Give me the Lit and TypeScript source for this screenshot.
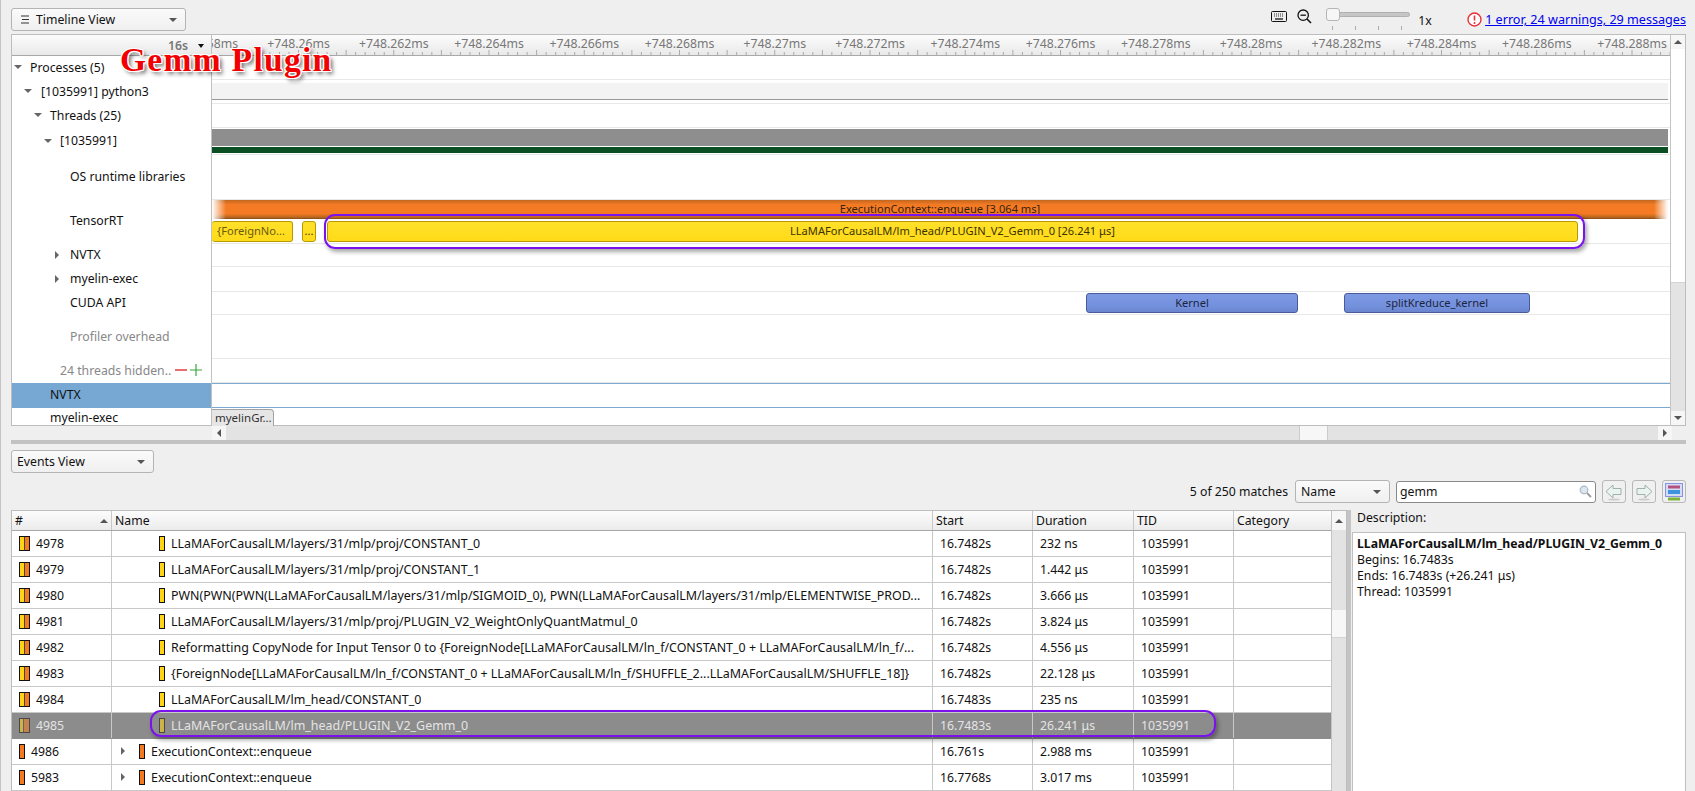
import { LitElement, html, css, svg } from "lit";
import { customElement } from "lit/decorators.js";

const TREE = [
  { h: 24, label: "Processes (5)", x: 30, arrow: "down", ax: 14 },
  { h: 24, label: "[1035991] python3", x: 41, arrow: "down", ax: 24 },
  { h: 24, label: "Threads (25)", x: 50, arrow: "down", ax: 34 },
  { h: 27, label: "[1035991]", x: 60, arrow: "down", ax: 44 },
  { h: 45, label: "OS runtime libraries", x: 70 },
  { h: 44, label: "TensorRT", x: 70, pb: 4 },
  { h: 23, label: "NVTX", x: 70, arrow: "right", ax: 55 },
  { h: 25, label: "myelin-exec", x: 70, arrow: "right", ax: 55 },
  { h: 23, label: "CUDA API", x: 70 },
  { h: 44, label: "Profiler overhead", x: 70, muted: true },
  { h: 24, label: "24 threads hidden..", x: 60, muted: true, hidden: true },
  { h: 25, label: "NVTX", x: 50, sel: true },
  { h: 18, label: "myelin-exec", x: 50, pb: 0 },
];

const RULER = Array.from({ length: 16 }, (_, i) => {
  const v = 258 + i * 2;
  const s = v % 10 === 0 ? String(v / 10) : String(v);
  return { text: `+748.${s}ms`, cx: 86.5 + (i - 1) * 95.25 };
});

const ROWS = [
  ["4978", "LLaMAForCausalLM/layers/31/mlp/proj/CONSTANT_0", "16.7482s", "232 ns"],
  ["4979", "LLaMAForCausalLM/layers/31/mlp/proj/CONSTANT_1", "16.7482s", "1.442 μs"],
  ["4980", "PWN(PWN(PWN(LLaMAForCausalLM/layers/31/mlp/SIGMOID_0), PWN(LLaMAForCausalLM/layers/31/mlp/ELEMENTWISE_PROD...", "16.7482s", "3.666 μs"],
  ["4981", "LLaMAForCausalLM/layers/31/mlp/proj/PLUGIN_V2_WeightOnlyQuantMatmul_0", "16.7482s", "3.824 μs"],
  ["4982", "Reformatting CopyNode for Input Tensor 0 to {ForeignNode[LLaMAForCausalLM/ln_f/CONSTANT_0 + LLaMAForCausalLM/ln_f/...", "16.7482s", "4.556 μs"],
  ["4983", "{ForeignNode[LLaMAForCausalLM/ln_f/CONSTANT_0 + LLaMAForCausalLM/ln_f/SHUFFLE_2...LLaMAForCausalLM/SHUFFLE_18]}", "16.7482s", "22.128 μs"],
  ["4984", "LLaMAForCausalLM/lm_head/CONSTANT_0", "16.7483s", "235 ns"],
  ["4985", "LLaMAForCausalLM/lm_head/PLUGIN_V2_Gemm_0", "16.7483s", "26.241 μs", "sel"],
  ["4986", "ExecutionContext::enqueue", "16.761s", "2.988 ms", "top"],
  ["5983", "ExecutionContext::enqueue", "16.7768s", "3.017 ms", "top"],
];

@customElement("app-root")
export class AppRoot extends LitElement {
  static styles = css`
    :host { display: block; width: 1695px; height: 791px; overflow: hidden; background: #efefef; font: 12.25px "Noto Sans", "Open Sans", sans-serif; color: #111; }
    .app { position: relative; box-sizing: border-box; width: 1695px; height: 791px; padding: 0 9px 0 10px; border-left: 1px solid #c4c4c4; display: flex; flex-direction: column; overflow: hidden; }
    .topbar { height: 34px; flex: none; display: flex; align-items: flex-start; position: relative; }
    .combo { box-sizing: border-box; height: 23px; border: 1px solid #b4b4b4; border-radius: 3px; background: linear-gradient(#fafafa, #f0f0f0); display: flex; align-items: center; padding: 0 4px 0 5px; gap: 6px; }
    .combo .t { flex: 1; }
    .caret { width: 0; height: 0; border-left: 4px solid transparent; border-right: 4px solid transparent; border-top: 4px solid #555; flex: none; margin-right: 4px; }
    .view { width: 175px; margin-top: 8px; padding-left: 8px; }
    .tools { margin-left: auto; display: flex; align-items: center; height: 34px; }
    .zoomslider { position: relative; width: 84px; height: 34px; margin: 0 8px 0 14px; }
    .track { position: absolute; left: 0; right: 0; top: 12px; height: 3px; background: #c6c6c6; border: 1px solid #b0b0b0; border-radius: 3px; }
    .thumb { position: absolute; left: 0; top: 8px; width: 12px; height: 11px; background: #f6f6f6; border: 1px solid #b5b5b5; border-radius: 3px; }
    .tick { position: absolute; top: 26px; width: 1px; height: 4px; background: #aaa; }
    .onex { width: 49px; padding-top: 6px; }
    .err { display: flex; align-items: center; gap: 3px; padding-top: 5px; }
    .err a { color: #0000ee; text-decoration: underline; font-size: 12.6px; }

    .timeline { flex: none; box-sizing: border-box; height: 392px; border: 1px solid #bdbdbd; display: flex; background: #fff; }
    .tl-main { flex: 1; min-width: 0; display: flex; flex-direction: column; }
    .tl-head { height: 21px; flex: none; box-sizing: border-box; display: flex; background: linear-gradient(#fcfcfc, #e9e9e9); border-bottom: 1px solid #a8a8a8; }
    .corner { width: 200px; box-sizing: border-box; flex: none; border-right: 1px solid #c0c0c0; display: flex; align-items: center; justify-content: flex-end; padding-right: 7px; color: #777; font-weight: 600; gap: 10px; }
    .corner .caret { border-top-color: #111; margin: 2px 0 0; border-left-width: 3.5px; border-right-width: 3.5px; }
    .ruler { position: relative; flex: 1; overflow: hidden; color: #777; }
    .ruler span { position: absolute; top: 0; line-height: 18px; transform: translateX(-50%); white-space: nowrap; }
    .ruler svg { position: absolute; left: 0; bottom: 0; }
    .tl-row { display: flex; flex: none; }
    .lbl { position: relative; box-sizing: border-box; width: 200px; flex: none; border-right: 1px solid #c0c0c0; display: flex; align-items: center; white-space: nowrap; }
    .lbl.muted { color: #888; }
    .lbl.sel { background: #76a8d3; }
    .lbl .arrow { position: absolute; }
    .ad { width: 0; height: 0; border-left: 4px solid transparent; border-right: 4px solid transparent; border-top: 4px solid #666; }
    .ar { width: 0; height: 0; border-top: 4px solid transparent; border-bottom: 4px solid transparent; border-left: 4px solid #666; }
    .pm { margin-left: 4px; display: inline-flex; gap: 3px; }
    .trk { position: relative; flex: 1; min-width: 0; box-sizing: border-box; border-bottom: 1px solid #e8e8e8; }
    .trk.seltrk { border-top: 1px solid #7aa9d2; border-bottom: 1px solid #7aa9d2; }
    .trk.last { border-bottom: none; }
    .b { position: absolute; box-sizing: border-box; }
    .py { left: 0; right: 2px; top: 3px; height: 17px; background: #f3f3f3; border-bottom: 1px solid #999; }
    .gray { left: 0; right: 2px; top: 1px; height: 17px; background: #8e8e8e; }
    .green { left: 0; right: 2px; top: 19px; height: 6px; background: #0a4f24; }
    .orange { left: 0; right: 2px; top: 0; height: 19px; text-align: center; line-height: 17px; font-size: 11.1px; color: #3a2208; background: linear-gradient(180deg, #c2661f 0%, #f47b24 25%, #f47b24 72%, #b5641e 92%, #7f4714 100%); }
    .fadeL, .fadeR { position: absolute; top: 0; bottom: 0; width: 14px; }
    .fadeL { left: 0; background: linear-gradient(90deg, #fff, rgba(255,255,255,0)); }
    .fadeR { right: 0; background: linear-gradient(270deg, #fff, rgba(255,255,255,0)); }
    .yel { top: 21px; height: 21px; border: 1px solid #b89a00; border-radius: 3px; text-align: center; line-height: 18px; background: linear-gradient(#ffe02a, #ffdb18); color: #3d3300; white-space: nowrap; overflow: hidden; font-size: 11.1px; }
    .yel.first { left: 0; width: 81px; text-align: left; padding-left: 5px; color: #6a5a10; border-left: none; }
    .yel.dots { left: 90px; width: 14px; }
    .yel.main { left: 115px; width: 1251px; }
    .blue { top: 1px; height: 20px; border: 1px solid #4a5a9a; border-radius: 3px; text-align: center; line-height: 17px; background: linear-gradient(#7f9ae4, #7390dd 70%, #6a85cc); color: #1c2440; font-size: 11.1px; }
    .kernel { left: 874px; width: 212px; }
    .split-k { left: 1132px; width: 186px; }
    .mye { left: 0; top: 1px; width: 62px; height: 17px; background: #e6e6e6; border: 1px solid #a2a2a2; border-bottom: none; border-left: none; border-radius: 0 4px 0 0; padding-left: 3px; line-height: 15px; overflow: hidden; color: #333; font-size: 11.5px; }

    .vs { width: 14px; flex: none; display: flex; flex-direction: column; background: #e3e3e3; border-left: 1px solid #c4c4c4; box-sizing: content-box; }
    .sbtn { flex: none; display: flex; align-items: center; justify-content: center; background: #f6f6f6; }
    .au { width: 0; height: 0; border-left: 4px solid transparent; border-right: 4px solid transparent; border-bottom: 4px solid #555; }
    .adn { width: 0; height: 0; border-left: 4px solid transparent; border-right: 4px solid transparent; border-top: 4px solid #555; }
    .al { width: 0; height: 0; border-top: 4px solid transparent; border-bottom: 4px solid transparent; border-right: 4px solid #555; }
    .arr { width: 0; height: 0; border-top: 4px solid transparent; border-bottom: 4px solid transparent; border-left: 4px solid #555; }
    .vthumb { background: #fff; flex: none; border-bottom: 1px solid #d4d4d4; }
    .vfill { flex: 1; }

    .hs { flex: none; height: 14px; margin-left: 201px; margin-right: 14px; display: flex; background: #e3e3e3; }
    .hs .sbtn { width: 14px; }
    .hthumb { width: 27px; flex: none; background: #f7f7f7; border-left: 1px solid #ccc; border-right: 1px solid #ccc; margin-left: 1073px; }
    .split { flex: none; height: 4px; background: #c2c2c2; }

    .ev { width: 143px; margin-top: 6px; flex: none; }
    .find { flex: none; height: 23px; margin-top: 7px; display: flex; justify-content: flex-end; align-items: center; }
    .find .cnt { margin-right: 7px; }
    .namec { width: 95px; margin-right: 6px; }
    .search { box-sizing: border-box; width: 200px; height: 22px; background: #fff; border: 1px solid #8a8a8a; border-radius: 3px; display: flex; align-items: center; padding: 0 3px; justify-content: space-between; }
    .ib { box-sizing: border-box; width: 24px; height: 23px; border: 1px solid #b8b8b8; border-radius: 3px; background: #f0f0f0; display: flex; align-items: center; justify-content: center; margin-left: 6px; }

    .lower { flex: 1; min-height: 0; margin-top: 7px; display: flex; }
    .table { box-sizing: border-box; width: 1336px; flex: none; border: 1px solid #bdbdbd; border-bottom: none; display: flex; background: #fff; }
    .tbody { flex: 1; min-width: 0; }
    .tr { display: grid; grid-template-columns: 100px 821px 100px 101px 100px 99px; height: 26px; box-sizing: border-box; border-bottom: 1px solid #c8c8c8; }
    .tr.head { height: 20px; background: linear-gradient(#fcfcfc, #ebebeb); border-bottom: 1px solid #a8a8a8; }
    .tr > div { box-sizing: border-box; border-right: 1px solid #c8c8c8; display: flex; align-items: center; white-space: nowrap; overflow: hidden; padding: 0 0 1px 7px; min-width: 0; }
    .tr.head > div { padding: 0 0 0 3px; }
    .tr.head > div:first-child { justify-content: space-between; padding-right: 3px; }
    .tr.sel { background: #8c8c8c; color: #e4e4e4; border-bottom-color: #8c8c8c; }
    .tr > div.nm.leaf { padding-left: 47px; }
    .tr > div.nm.top { padding-left: 9px; }
    .nm .txt { overflow: hidden; white-space: nowrap; font-size: 12.45px; }
    .nm .ar { margin-right: 14px; flex: none; }
    .nm .ico { margin-right: 6px; margin-top: 1px; }
    .tr > div.num { gap: 6px; }
    .num .ico { margin-top: 1px; }
    .ico { box-sizing: border-box; height: 15px; border: 1.5px solid #111; flex: none; }
    .i2 { width: 11px; background: linear-gradient(90deg, #ffd414 0 3.5px, #444 3.5px 4.5px, #f47a20 4.5px); }
    .i1o { width: 6px; background: #f47a20; }
    .i1y { width: 6px; background: #ffd414; }
    .tr.sel .ico { opacity: .55; }
    .ts { width: 14px; flex: none; display: flex; flex-direction: column; background: #e3e3e3; border-left: 1px solid #c4c4c4; }
    .ts .gap { height: 80px; flex: none; }
    .ts .vthumb { height: 27px; background: #f7f7f7; }
    .desc { flex: 1; display: flex; flex-direction: column; min-width: 0; }
    .desc .h { height: 22px; flex: none; line-height: 16px; padding-left: 5px; }
    .desc .box { flex: 1; background: #fff; border: 1px solid #c0c0c0; border-bottom: none; padding: 3px 4px; line-height: 16px; }
    .desc b { font-weight: 700; }
    .sp { width: 5px; flex: none; background: linear-gradient(90deg, #c4c4c4 0 4px, transparent 4px); }

    .title { position: absolute; left: 119px; top: 41px; font: bold 33.5px "Liberation Serif", serif; letter-spacing: 1.3px; color: #f20000; white-space: nowrap; text-shadow: 1px 0 0 #fff, -1px 0 0 #fff, 0 1px 0 #fff, 0 -1px 0 #fff, 1px 1px 0 #fff, -1px -1px 0 #fff, 1px -1px 0 #fff, -1px 1px 0 #fff, 3px 3px 4px rgba(0,0,0,.6); }
    .ring { position: absolute; box-sizing: border-box; border: 2px solid #7a12ee; border-radius: 11px; box-shadow: 2px 3px 4px rgba(0,0,0,.35); pointer-events: none; }
    .ring1 { left: 323px; top: 214px; width: 1261px; height: 35px; }
    .ring2 { left: 149px; top: 710px; width: 1066px; height: 27px; }
  `;

  private ticks() {
    const lines = [];
    for (let i = 0; i < 154; i++) {
      const x = 86.5 - 47.625 + i * 9.525;
      const major = i % 5 === 0;
      lines.push(svg`<line x1=${x} x2=${x} y1=${major ? 0 : 2} y2="5" stroke="#aaa" stroke-width="1"></line>`);
    }
    return html`<svg width="1460" height="5">${lines}</svg>`;
  }

  private track(i: number) {
    switch (i) {
      case 1: return html`<div class="b py"></div>`;
      case 3: return html`<div class="b gray"></div><div class="b green"></div>`;
      case 5: return html`
        <div class="b orange">ExecutionContext::enqueue [3.064 ms]<div class="fadeL"></div><div class="fadeR"></div></div>
        <div class="b yel first">{ForeignNo...</div>
        <div class="b yel dots">...</div>
        <div class="b yel main">LLaMAForCausalLM/lm_head/PLUGIN_V2_Gemm_0 [26.241 μs]</div>`;
      case 8: return html`
        <div class="b blue kernel">Kernel</div>
        <div class="b blue split-k">splitKreduce_kernel</div>`;
      case 12: return html`<div class="b mye">myelinGr...</div>`;
    }
    return "";
  }

  private lbl(r: any) {
    const pb = r.pb ?? 2;
    return html`<div class="lbl ${r.muted ? "muted" : ""} ${r.sel ? "sel" : ""}" style="padding-left:${r.x - 12}px;padding-bottom:${pb}px">
      ${r.arrow ? html`<span class="arrow ${r.arrow === "down" ? "ad" : "ar"}" style="left:${r.ax - 12}px"></span>` : ""}
      <span>${r.label}</span>
      ${r.hidden ? html`<span class="pm"><svg width="12" height="12" viewBox="0 0 12 12"><path d="M0 6h12" stroke="#e23030" stroke-width="1.4"/></svg><svg width="12" height="12" viewBox="0 0 12 12"><path d="M0 6h12M6 0v12" stroke="#3aa83a" stroke-width="1.2"/></svg></span>` : ""}
    </div>`;
  }

  render() {
    return html`<div class="app">
      <div class="topbar">
        <div class="combo view">
          <svg width="10" height="9" viewBox="0 0 10 9"><path d="M1 1h8M2 4.500h7M1 8h8" stroke="#333" stroke-width="1.200"/></svg>
          <span class="t">Timeline View</span><span class="caret"></span>
        </div>
        <div class="tools">
          <svg width="16" height="11" viewBox="0 0 16 11" style="margin-top:-1px;margin-right:10px"><rect x=".5" y=".5" width="15" height="10" rx="1" fill="#eee" stroke="#111"/><path d="M3 3h10M3 5h10" stroke="#333" stroke-dasharray="1 1" stroke-width="1"/><path d="M4 8h8" stroke="#111" stroke-width="1.300"/></svg>
          <svg width="15" height="16" viewBox="0 0 15 16" style="margin-top:-1px"><circle cx="6.200" cy="6.200" r="5.200" fill="none" stroke="#111" stroke-width="1.300"/><path d="M3.500 6.200h5.400" stroke="#111" stroke-width="1.300"/><path d="M10 10l4 4" stroke="#111" stroke-width="1.600"/></svg>
          <div class="zoomslider">
            <div class="track"></div><div class="thumb"></div>
            <i class="tick" style="left:6px"></i><i class="tick" style="left:29px"></i><i class="tick" style="left:52px"></i><i class="tick" style="left:75px"></i>
          </div>
          <span class="onex">1x</span>
          <span class="err">
            <svg width="15" height="15" viewBox="0 0 15 15"><circle cx="7.500" cy="7.500" r="6.500" fill="#fff" stroke="#e8303a" stroke-width="1.400"/><path d="M7.500 3.500v5" stroke="#e8303a" stroke-width="1.600"/><circle cx="7.500" cy="11" r="1" fill="#e8303a"/></svg>
            <a>1 error, 24 warnings, 29 messages</a>
          </span>
        </div>
      </div>

      <div class="timeline">
        <div class="tl-main">
          <div class="tl-head">
            <div class="corner"><span>16s</span><span class="caret"></span></div>
            <div class="ruler">
              ${RULER.map((l) => html`<span style="left:${l.cx}px">${l.text}</span>`)}
              ${this.ticks()}
            </div>
          </div>
          ${TREE.map((r, i) => html`<div class="tl-row" style="height:${r.h}px">
            ${this.lbl(r)}
            <div class="trk ${r.sel ? "seltrk" : ""} ${i === 12 ? "last" : ""}">${this.track(i)}</div>
          </div>`)}
        </div>
        <div class="vs">
          <div class="sbtn" style="height:14px"><span class="au"></span></div>
          <div class="vthumb" style="height:233px"></div>
          <div class="vfill"></div>
          <div class="sbtn" style="height:14px"><span class="adn"></span></div>
        </div>
      </div>
      <div class="hs">
        <div class="sbtn"><span class="al"></span></div>
        <div class="hthumb"></div>
        <div class="vfill"></div>
        <div class="sbtn"><span class="arr"></span></div>
      </div>
      <div class="split"></div>

      <div class="combo ev"><span class="t">Events View</span><span class="caret"></span></div>
      <div class="find">
        <span class="cnt">5 of 250 matches</span>
        <div class="combo namec"><span class="t">Name</span><span class="caret"></span></div>
        <div class="search"><span>gemm</span>
          <svg width="13" height="13" viewBox="0 0 13 13"><circle cx="5" cy="5" r="3.800" fill="#dbe8f2" stroke="#a8b8c4" stroke-width="1.200"/><path d="M8 8l4 4" stroke="#999" stroke-width="1.800"/></svg>
        </div>
        <div class="ib"><svg width="18" height="18" viewBox="0 0 18 18"><path d="M1 8.500L8 2v3.500h8v6H8V15z" fill="#e9f3f0" stroke="#9fb0ac"/><ellipse cx="9" cy="16.500" rx="6" ry="1" fill="#ccc"/></svg></div>
        <div class="ib"><svg width="18" height="18" viewBox="0 0 18 18"><path d="M17 8.500L10 2v3.500H2v6h8V15z" fill="#e9f3f0" stroke="#9fb0ac"/><ellipse cx="9" cy="16.500" rx="6" ry="1" fill="#ccc"/></svg></div>
        <div class="ib"><svg width="18" height="18" viewBox="0 0 18 18"><rect x=".5" y=".5" width="17" height="13" fill="#d5dcf5" stroke="#2a3fd0" stroke-dasharray="1 1"/><rect x="3" y="2.500" width="12" height="3" fill="#b6527f"/><rect x="3" y="7" width="12" height="4" fill="#3d93e0"/><rect x="3" y="14.500" width="12" height="3" fill="#7cb53a"/></svg></div>
      </div>

      <div class="lower">
        <div class="table">
          <div class="tbody">
            <div class="tr head">
              <div><span>#</span><span class="au"></span></div>
              <div>Name</div><div>Start</div><div>Duration</div><div>TID</div><div>Category</div>
            </div>
            ${ROWS.map((r) => {
              const top = r[4] === "top";
              return html`<div class="tr ${r[4] === "sel" ? "sel" : ""}">
                <div class="num"><span class="ico ${top ? "i1o" : "i2"}"></span><span>${r[0]}</span></div>
                <div class="nm ${top ? "top" : "leaf"}">
                  ${top ? html`<span class="ar"></span>` : ""}
                  <span class="ico ${top ? "i1o" : "i1y"}"></span>
                  <span class="txt">${r[1]}</span>
                </div>
                <div>${r[2]}</div><div>${r[3]}</div><div>1035991</div><div></div>
              </div>`;
            })}
          </div>
          <div class="ts">
            <div class="sbtn" style="height:19px"><span class="au"></span></div>
            <div class="gap"></div>
            <div class="vthumb"></div>
          </div>
        </div>
        <div class="sp"></div>
        <div class="desc">
          <div class="h">Description:</div>
          <div class="box">
            <b>LLaMAForCausalLM/lm_head/PLUGIN_V2_Gemm_0</b><br>
            Begins: 16.7483s<br>
            Ends: 16.7483s (+26.241 μs)<br>
            Thread: 1035991
          </div>
        </div>
      </div>

      <div class="title">Gemm Plugin</div>
      <div class="ring ring1"></div>
      <div class="ring ring2"></div>
    </div>`;
  }
}
